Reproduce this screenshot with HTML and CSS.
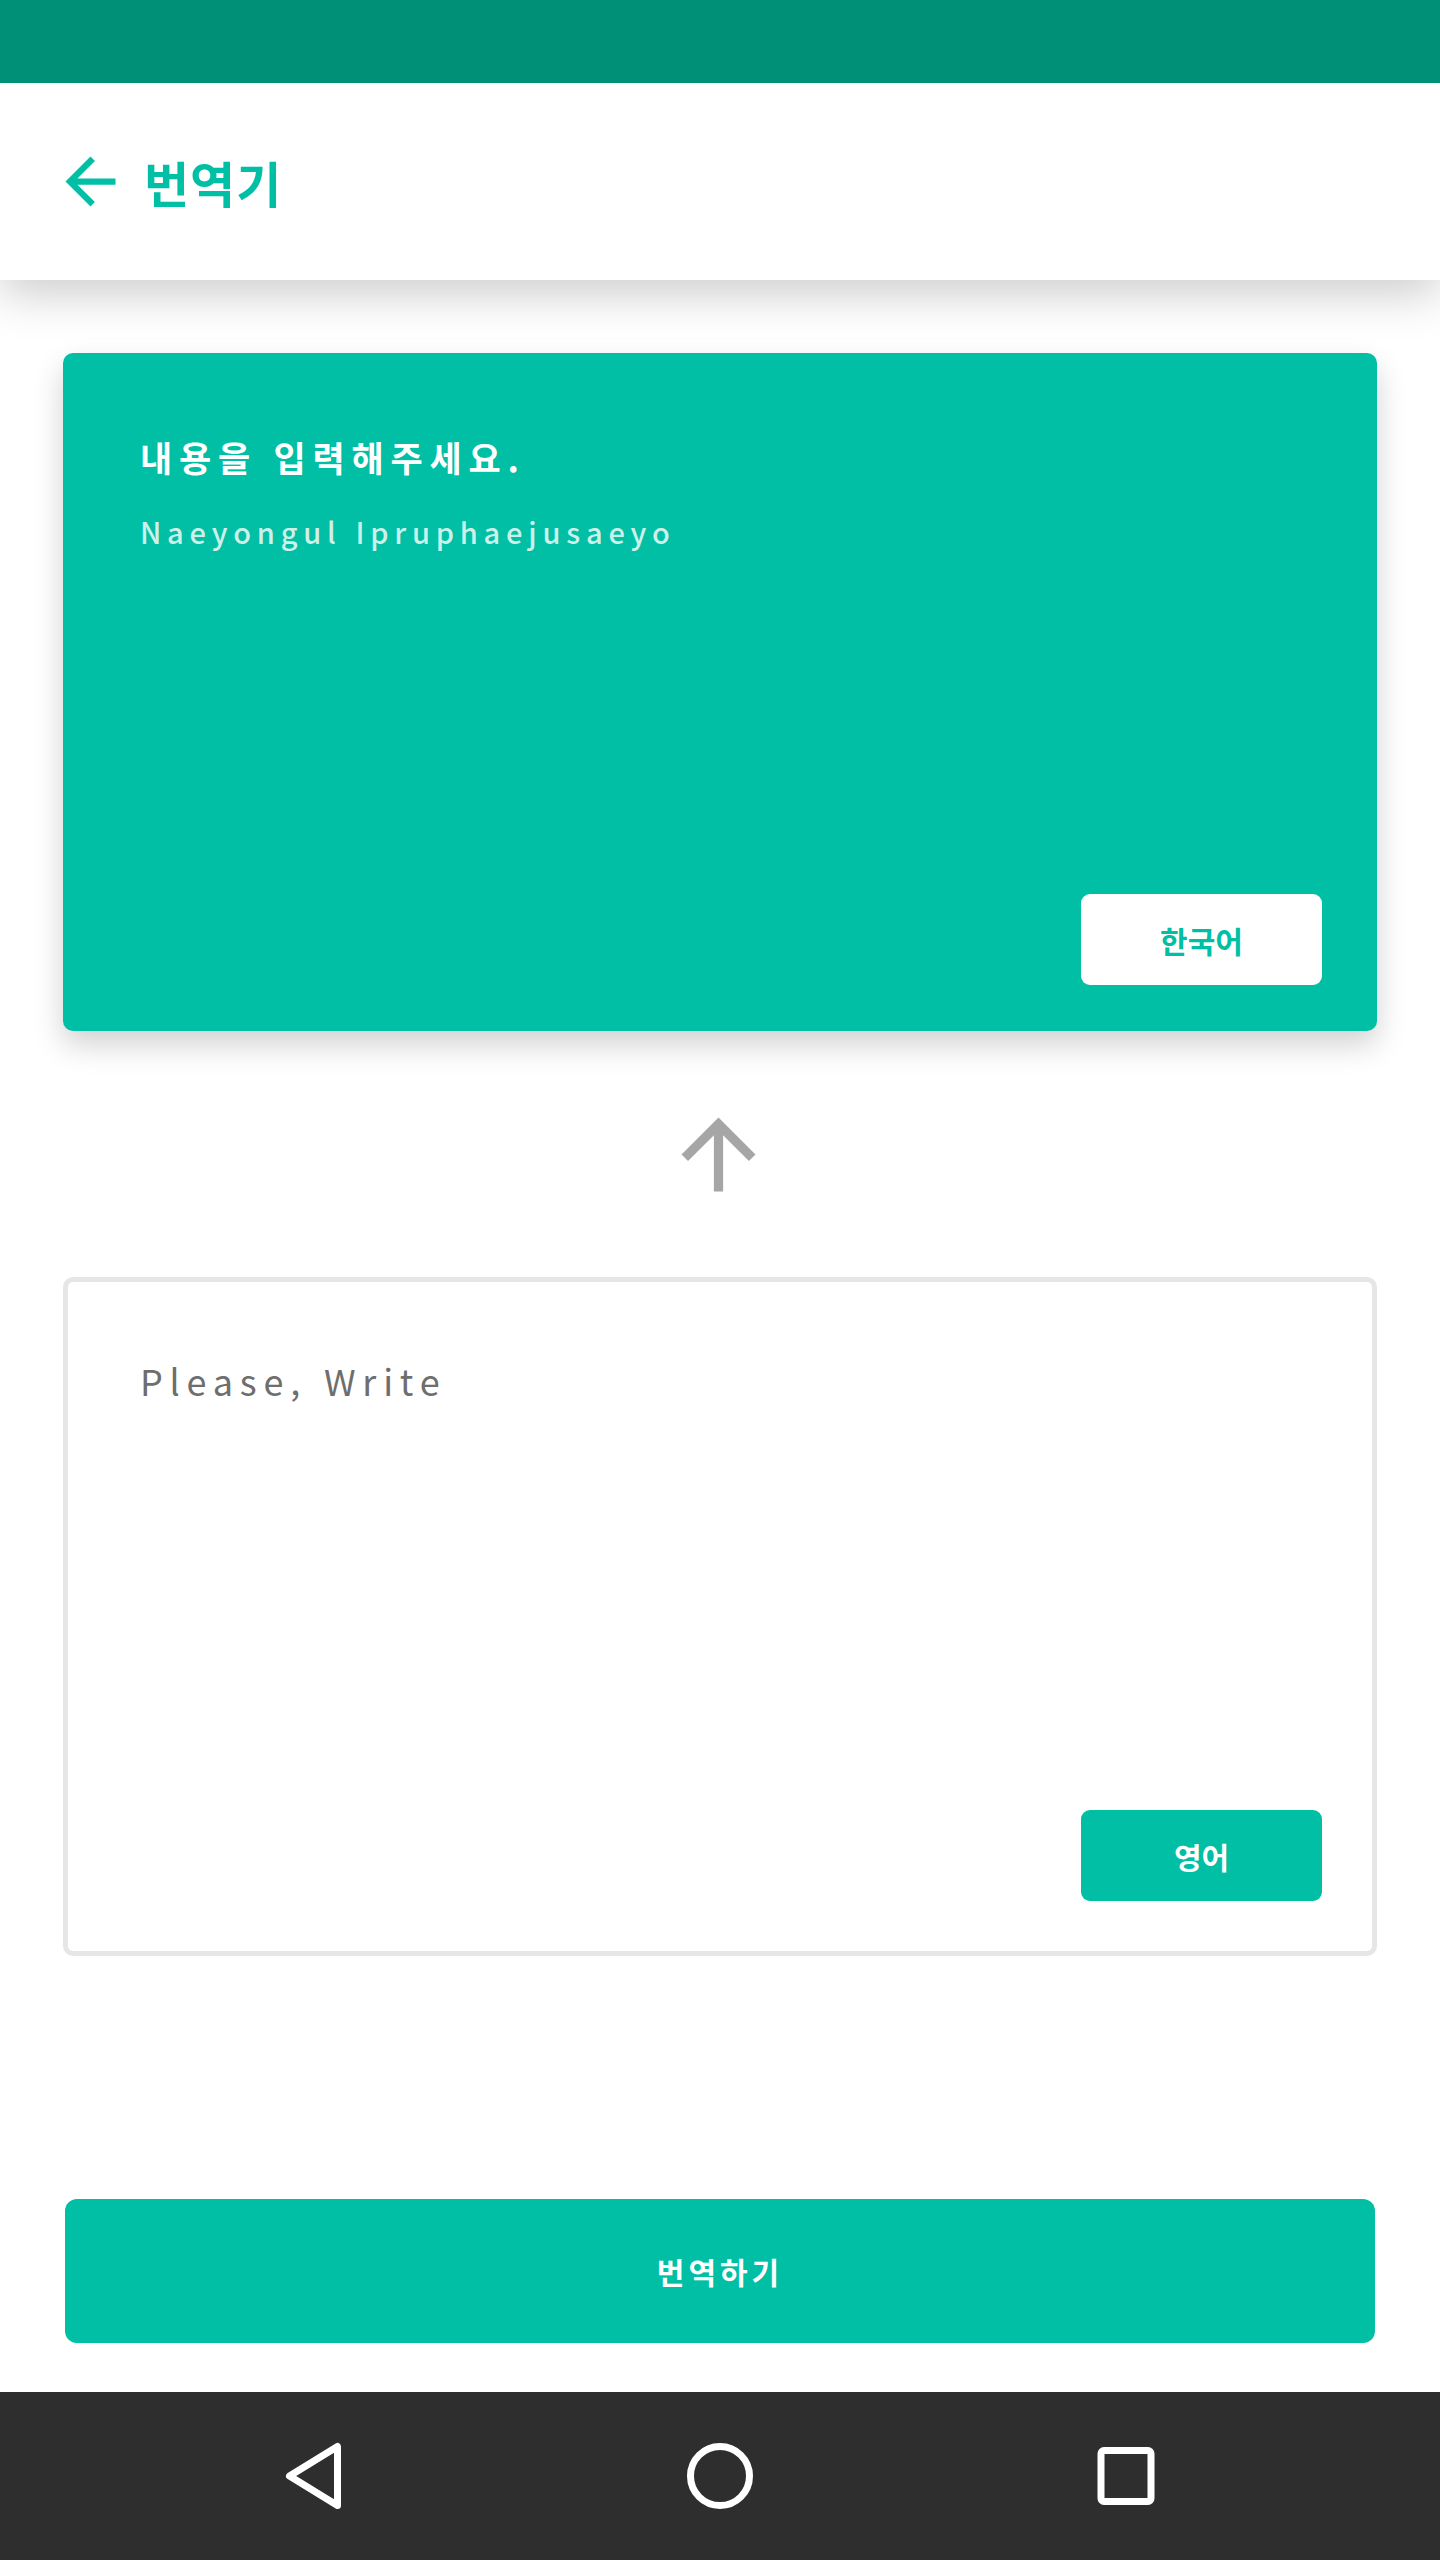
FILE: index.html
```html
<!DOCTYPE html>
<html lang="ko">
<head>
<meta charset="utf-8">
<title>번역기</title>
<link rel="stylesheet" href="styles.css">
</head>
<body>
<div class="screen">
  <div class="status-bar"></div>
  <header class="app-header">
    <svg class="back-icon" viewBox="0 0 24 24" aria-hidden="true"><path d="M20 11H7.83l5.59-5.590L12 4l-8 8 8 8 1.41-1.41L7.83 13H20v-2z"/></svg>
    <h1 class="app-title">번역기</h1>
  </header>
  <main class="content">
    <section class="card card-source">
      <div class="card-text">
        <p class="source-title">내용을 입력해주세요.</p>
        <p class="source-roman">Naeyongul Ipruphaejusaeyo</p>
      </div>
      <button class="lang-btn lang-btn-light">한국어</button>
    </section>
    <div class="swap-zone">
      <svg class="swap-icon" viewBox="0 0 24 24" aria-hidden="true"><path d="M4 12l1.41 1.41L11 7.83V20h2V7.83l5.58 5.59L20 12l-8-8-8 8z"/></svg>
    </div>
    <section class="card card-target">
      <div class="card-text">
        <p class="target-text">Please, Write</p>
      </div>
      <button class="lang-btn lang-btn-solid">영어</button>
    </section>
    <button class="translate-btn">번역하기</button>
  </main>
  <nav class="nav-bar">
    <span class="nav-slot">
      <svg viewBox="0 0 70 70" class="nav-icon"><path d="M10.5 35 L58.5 5.5 L58.5 64.5 Z"/></svg>
    </span>
    <span class="nav-slot">
      <svg viewBox="0 0 70 70" class="nav-icon"><circle cx="35" cy="35" r="29.5"/></svg>
    </span>
    <span class="nav-slot">
      <svg viewBox="0 0 70 70" class="nav-icon"><rect x="10" y="9.5" width="50" height="51" rx="3"/></svg>
    </span>
  </nav>
</div>
</body>
</html>
```
FILE: styles.css
```css
* { box-sizing: border-box; }
html, body { margin: 0; padding: 0; background: #ffffff; }
body {
  font-family: "Noto Sans CJK KR", "Noto Sans", sans-serif;
}
.screen {
  width: 1440px;
  height: 2560px;
  display: flex;
  flex-direction: column;
  overflow: hidden;
}
.status-bar {
  height: 83px;
  background: #008f77;
  flex: none;
  position: relative;
  z-index: 3;
}
.app-header {
  height: 197px;
  flex: none;
  background: #ffffff;
  display: flex;
  align-items: center;
  padding-left: 53px;
  gap: 16px;
  box-shadow: 0 14px 44px rgba(0, 0, 0, 0.2);
  position: relative;
  z-index: 2;
}
.back-icon {
  width: 75px;
  height: 75px;
  fill: #00bfa5;
  flex: none;
}
.app-title {
  margin: 0;
  font-size: 49px;
  font-weight: 700;
  color: #00bfa5;
  letter-spacing: 1px;
  line-height: 1;
}
.content {
  flex: 1;
  display: flex;
  flex-direction: column;
  padding: 73px 63px 0;
}
.card {
  border-radius: 10px;
  display: flex;
  flex-direction: column;
  justify-content: space-between;
  align-items: stretch;
}
.card p { margin: 0; }
.card-source {
  height: 678px;
  background: #00bfa5;
  padding: 83px 55px 46px 77px;
  box-shadow: 0 14px 30px rgba(0, 0, 0, 0.18);
}
.source-title {
  font-size: 35px;
  font-weight: 700;
  color: #ffffff;
  letter-spacing: 6.8px;
  line-height: 1.2;
}
.source-roman {
  margin-top: 36px !important;
  font-size: 29px;
  font-weight: 500;
  color: #cdf1e9;
  letter-spacing: 5.8px;
  line-height: 1.2;
}
.lang-btn {
  align-self: flex-end;
  width: 241px;
  height: 91px;
  border: none;
  border-radius: 9px;
  font-family: "Noto Sans CJK KR", sans-serif;
  font-size: 30px;
  font-weight: 700;
  padding: 0;
}
.lang-btn-light {
  background: #ffffff;
  color: #00bfa5;
}
.lang-btn-solid {
  background: #00bfa5;
  color: #ffffff;
}
.swap-zone {
  height: 246px;
  display: flex;
  align-items: center;
  justify-content: center;
}
.swap-icon {
  width: 111px;
  height: 111px;
  fill: #a6a6a6;
  margin-left: -3px;
}
.card-target {
  height: 679px;
  background: #ffffff;
  border: 5px solid #e6e6e6;
  padding: 77px 50px 50px 72px;
}
.target-text {
  font-size: 36px;
  color: #6e6e6e;
  letter-spacing: 6.8px;
  line-height: 1.2;
}
.translate-btn {
  margin: 243px 2px 0;
  height: 144px;
  border: none;
  border-radius: 12px;
  background: #00bfa5;
  color: #ffffff;
  font-family: "Noto Sans CJK KR", sans-serif;
  font-size: 30px;
  font-weight: 700;
  letter-spacing: 4px;
  padding: 0;
}
.nav-bar {
  margin-top: 49px;
  height: 168px;
  flex: none;
  background: #2e2e2e;
  display: flex;
  align-items: center;
  justify-content: center;
  gap: 286px;
}
.nav-slot {
  width: 120px;
  height: 70px;
  display: flex;
  justify-content: center;
}
.nav-icon {
  width: 70px;
  height: 70px;
  fill: none;
  stroke: #ffffff;
  stroke-width: 7;
  stroke-linejoin: round;
}
```
